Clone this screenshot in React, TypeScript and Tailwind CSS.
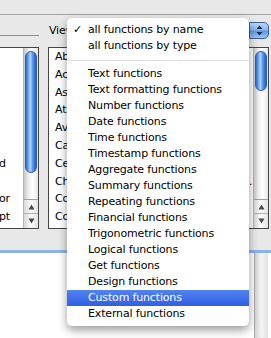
import React from "react";

const menuItems: (string | null)[] = [
  "all functions by name",
  "all functions by type",
  null,
  "Text functions",
  "Text formatting functions",
  "Number functions",
  "Date functions",
  "Time functions",
  "Timestamp functions",
  "Aggregate functions",
  "Summary functions",
  "Repeating functions",
  "Financial functions",
  "Trigonometric functions",
  "Logical functions",
  "Get functions",
  "Design functions",
  "Custom functions",
  "External functions",
];

const funcs = [
  "Abs ( number )",
  "Acos ( number )",
  "Asin ( number )",
  "Atan ( number )",
  "Average ( field {; field...} )",
  "Case ( test1 ; result1 {; test2 ; result2 ; ... ; defaultResult} )",
  "Ceiling ( number )",
  "Choose ( test ; result0 {; result1 ; result2...} )",
  "Combination ( setSize ; numberOfChoices ; more )",
  "Cos ( angleInRadians )",
];

const leftRows = ["", "", "", "", "", "", "d", "", "or", "pt"];

function Arrows() {
  return (
    <div className="flex flex-col border-t border-[#a0a0a0]">
      <div className="h-[14px] flex items-center justify-center bg-[linear-gradient(to_right,#d8d8d8,#fafafa_50%,#e4e4e4)] border-b border-[#b0b0b0]">
        <svg width="7" height="6" viewBox="0 0 7 6">
          <path d="M3.5 0.5 L6.5 5.5 L0.5 5.5 Z" fill="#4a4a4a" />
        </svg>
      </div>
      <div className="h-[14px] flex items-center justify-center bg-[linear-gradient(to_right,#d8d8d8,#fafafa_50%,#e4e4e4)]">
        <svg width="7" height="6" viewBox="0 0 7 6">
          <path d="M0.5 0.5 L6.5 0.5 L3.5 5.5 Z" fill="#4a4a4a" />
        </svg>
      </div>
    </div>
  );
}

function Scrollbar({ thumbH }: { thumbH: number }) {
  return (
    <div className="w-[15px] shrink-0 h-full flex flex-col border-l border-[#b4b4b4] bg-[linear-gradient(to_right,#c9c9c9,#ececec_30%,#ffffff_60%,#e6e6e6)]">
      <div className="flex-1 px-[1px] pt-[3px] pb-[2px]">
        <div
          className="w-full rounded-full border border-[#2d5db0] bg-[linear-gradient(to_right,#2e6ad0,#7fb5f0_30%,#a8d2f8_45%,#5d9cec_65%,#3476dc_85%,#2a5fc0)]"
          style={{ height: thumbH }}
        />
      </div>
      <Arrows />
    </div>
  );
}

export default function App() {
  return (
    <div className="relative w-[271px] h-[338px] overflow-hidden bg-[#e8e8e8] font-['DejaVu_Sans',sans-serif] text-[11px] tracking-[-0.16px] text-black flex flex-col">
      <div className="h-[15px] shrink-0 border-b border-[#a2a2a2]" />
      <div className="h-[32px] shrink-0 flex items-start">
        <div className="w-[39px] shrink-0 h-[21px] border-b border-[#8e8e8e]" />
        <div className="ml-[10px] mt-[8px] leading-[16px]">View:</div>
        <div className="ml-auto mr-[2px] mt-[7px] w-[20px] h-[17px] rounded-r-[5px] border border-[#3a5f9e] bg-[linear-gradient(to_bottom,#bcd8f6,#8ab8ee_45%,#5d98e4_55%,#9cc8f4)] flex items-center justify-center">
          <svg width="7" height="11" viewBox="0 0 7 11">
            <path d="M3.5 0.5 L6.5 4 L0.5 4 Z M0.5 7 L6.5 7 L3.5 10.5 Z" fill="#1d2d4d" />
          </svg>
        </div>
      </div>
      <div className="h-[182px] shrink-0 flex">
        <div className="w-[39px] shrink-0 h-full border-y border-r border-[#454545] bg-white flex">
          <div className="flex-1 min-w-0 overflow-hidden">
            {leftRows.map((t, i) => (
              <div key={i} className="h-[17.8px] leading-[17.8px] whitespace-nowrap ml-[-1px]">
                {t}
              </div>
            ))}
          </div>
          <Scrollbar thumbH={122} />
        </div>
        <div className="ml-[9px] mr-[2px] flex-1 min-w-0 h-full border border-[#454545] bg-white flex">
          <div className="flex-1 min-w-0 overflow-hidden pl-[6px]">
            {funcs.map((t, i) => (
              <div key={i} className="h-[17.8px] leading-[17.8px] whitespace-nowrap overflow-hidden text-ellipsis">
                {t}
              </div>
            ))}
          </div>
          <Scrollbar thumbH={40} />
        </div>
      </div>
      <div className="h-[21px] shrink-0" />
      <div className="flex-1 flex border-t-[3px] border-[#8db3e8] bg-white">
        <div className="flex-1" />
        <div className="w-[14px] mr-[3px] border-l border-[#a8a8a8] bg-[linear-gradient(to_right,#d4d4d4,#f4f4f4_50%,#e2e2e2)]" />
      </div>

      <div className="absolute left-[67px] top-[18px] w-[182px] h-[308px] rounded-[5px] bg-white shadow-[0_4px_10px_rgba(0,0,0,0.4)] pt-[4px]">
        {menuItems.map((t, i) =>
          t === null ? (
            <div key={i} className="h-[12px] flex items-center">
              <div className="w-full h-px bg-[#dcdcdc]" />
            </div>
          ) : (
            <div
              key={i}
              className={
                "relative h-[16px] leading-[16px] pl-[21px] whitespace-nowrap " +
                (t === "Custom functions"
                  ? "text-white bg-[linear-gradient(to_bottom,#5283f0,#2f5fe3)]"
                  : "")
              }
            >
              {i === 0 && <span className="absolute left-[6px] top-0">✓</span>}
              {t}
            </div>
          )
        )}
      </div>
    </div>
  );
}
